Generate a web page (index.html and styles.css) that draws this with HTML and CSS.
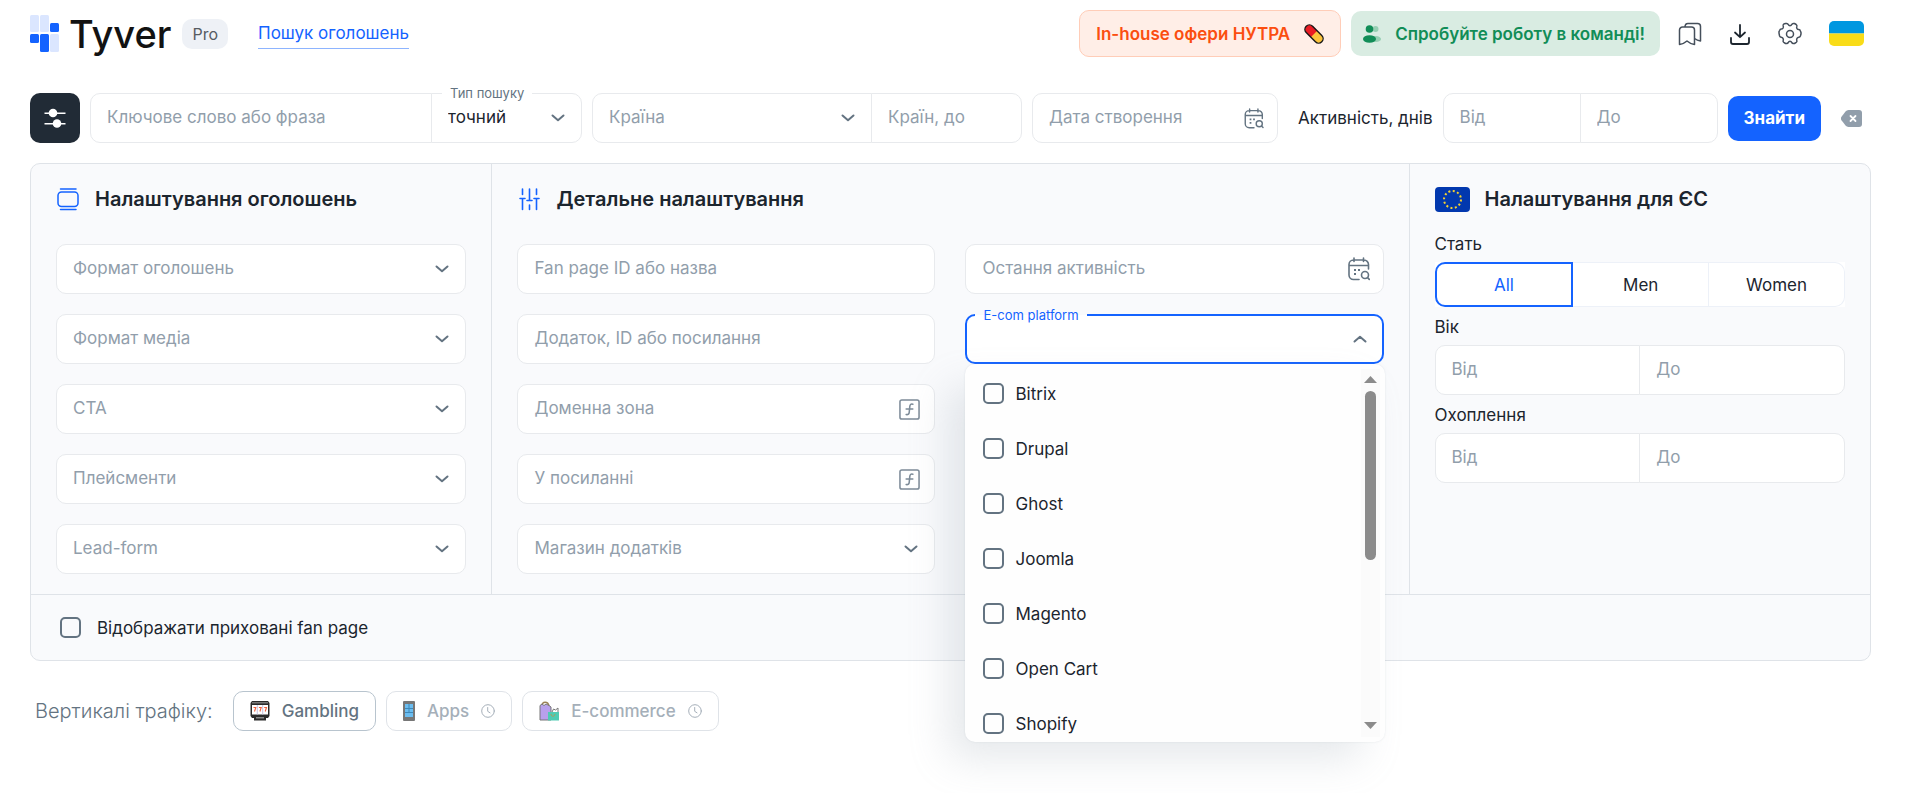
FILE: index.html
```
<!DOCTYPE html>
<html lang="uk">

<head>
  <meta charset="UTF-8">
  <meta name="viewport" content="width=device-width, initial-scale=1">
  <title>Tyver</title>
  <link rel="stylesheet" href="styles.css">
</head>

<body>
  <svg class="sprite" width="0" height="0" aria-hidden="true">
    <symbol id="chevron" viewBox="0 0 14 8"><path d="M1.500 1.500 7 6.200l5.500-4.700" fill="none" stroke="currentColor" stroke-width="2" stroke-linecap="round" stroke-linejoin="round"/></symbol>
    <symbol id="calendar" viewBox="0 0 22 24">
      <g fill="none" stroke="currentColor" stroke-width="1.600" stroke-linecap="round">
        <path d="M20.500 12V7.500a4.500 4.500 0 0 0-4.500-4.500H5.500A4.500 4.500 0 0 0 1 7.500V18a4.500 4.500 0 0 0 4.500 4.500H11M1 8.500h19.500M6 1v3.500M15.500 1v3.500"/>
        <circle cx="17" cy="18" r="3.500"/><path d="m19.600 20.600 1.700 1.800"/>
      </g>
      <path d="M6 12h2v2H6zM10 12h2v2h-2zM6 16h2v2H6z" fill="currentColor"/>
    </symbol>
    <symbol id="func" viewBox="0 0 22 22"><g fill="none" stroke="currentColor" stroke-width="1.600" stroke-linecap="round"><rect x="1" y="1" width="20" height="20" rx="2"/><path d="M14.500 5.500c-2.300-.6-3 .6-3.200 2.500L10.700 14c-.2 1.700-1 2.600-3.200 2.300M7.500 10.500h7"/></g></symbol>
    <symbol id="clock" viewBox="0 0 14 14"><g fill="none" stroke="currentColor" stroke-linecap="round"><circle cx="7" cy="7" r="6.300"/><path d="M6.700 3.500v3.800l2.300 1.500"/></g></symbol>
  </svg>

  <header class="header">
    <a class="logo" href="#">
      <svg width="29" height="37" viewBox="0 0 29 37">
        <g fill="#dbe6ff"><rect width="9" height="17" rx="1.500"/><rect x="10" width="9" height="17" rx="1.500"/><rect x="20" y="19" width="9" height="18" rx="1.500"/></g>
        <g fill="#1463ff"><rect x="20" y="8" width="9" height="9" rx="1.500"/><rect y="19" width="9" height="9" rx="1.500"/><rect x="10" y="19" width="9" height="18" rx="1.500"/></g>
      </svg>
      <span class="logo-text">Tyver</span>
    </a>
    <span class="badge">Pro</span>
    <a class="nav-link" href="#">Пошук оголошень</a>

    <div class="header-right">
      <button class="promo promo-orange">In-house офери НУТРА
        <svg width="20" height="20" viewBox="0 0 20 20">
          <g transform="rotate(45 10 10)"><rect x="-1" y="5.500" width="22" height="9" rx="4.500" fill="#fcc43c"/><path d="M10 5.500H3.500a4.500 4.500 0 0 0 0 9H10z" fill="#ea1c24"/><rect x="-1" y="5.500" width="22" height="9" rx="4.500" fill="none" stroke="#161616" stroke-width="1.400"/></g>
        </svg>
      </button>
      <button class="promo promo-green">
        <svg width="18" height="18" viewBox="0 0 18 18">
          <g fill="#97cfb3"><circle cx="12.500" cy="4" r="3"/><ellipse cx="13" cy="14" rx="5" ry="3"/></g>
          <g fill="#118d57"><circle cx="6.500" cy="4" r="3.800"/><ellipse cx="6.500" cy="14" rx="6.500" ry="3.800"/></g>
        </svg>
        Спробуйте роботу в команді!
      </button>
      <button class="icon-btn" aria-label="Закладки">
        <svg width="24" height="24" viewBox="0 0 24 24" fill="none" stroke="#454f5b" stroke-width="1.500" stroke-linejoin="round"><path d="M1.500 22.500V8a3 3 0 0 1 3-3h9a3 3 0 0 1 3 3v14.500c-2.800-.3-5.300-1.600-7.500-3.500-2.200 1.900-4.700 3.200-7.500 3.500z"/><path d="M7 5c0-2.500 1-3.500 3-3.500h9.500a3 3 0 0 1 3 3V19c-2.200-.3-4-1-6-2.500"/></svg>
      </button>
      <button class="icon-btn" aria-label="Завантаження">
        <svg width="22" height="22" viewBox="0 0 22 22" fill="none" stroke="#1c252e" stroke-width="1.800" stroke-linecap="round" stroke-linejoin="round"><path d="M11 2v12M6 9.500l5 4.700 5-4.700M2 15v4a2 2 0 0 0 2 2h14a2 2 0 0 0 2-2v-4"/></svg>
      </button>
      <button class="icon-btn" aria-label="Налаштування">
        <svg width="24" height="24" viewBox="0 0 24 24" fill="none" stroke="#454f5b" stroke-width="1.500" stroke-linejoin="round"><circle cx="12" cy="12" r="3.500"/><path d="M7.500 1.500h1.200c.8 0 1.300.4 1.600 1.100.3.800.9 1.200 1.700 1.200s1.400-.4 1.700-1.200c.3-.7.800-1.100 1.600-1.100h1.200l1.700 1c.7.500.9 1.200.6 2-.3.700-.2 1.500.2 2.100.4.700 1 1 1.700 1 .9.100 1.500.6 1.700 1.400l.6 1.600v1.500l-.6 1.900c-.3.700-.8 1.100-1.600 1.200-.8.100-1.400.4-1.800 1.100-.4.700-.5 1.400-.2 2.100.3.800.1 1.500-.6 2l-1.700 1.100h-1.200c-.8 0-1.300-.4-1.600-1.100-.3-.8-.9-1.200-1.700-1.200s-1.400.4-1.700 1.200c-.3.700-.8 1.100-1.600 1.100H7.500l-1.700-1.100c-.7-.5-.9-1.200-.6-2 .3-.7.200-1.400-.2-2.100-.4-.7-1-1-1.800-1.100-.8-.1-1.300-.5-1.600-1.200L1 11.100V9.600L1.600 8.500c.3-.8.800-1.300 1.700-1.400.7 0 1.300-.4 1.700-1 .4-.7.500-1.400.2-2.100-.3-.8-.1-1.500.6-2z"/></svg>
      </button>
      <button class="icon-btn" aria-label="Українська">
        <svg width="35" height="25" viewBox="0 0 35 25"><path d="M5 0h25a5 5 0 0 1 5 5v7.500H0V5a5 5 0 0 1 5-5z" fill="#0097e0"/><path d="M0 12.500h35V20a5 5 0 0 1-5 5H5a5 5 0 0 1-5-5z" fill="#f9dc18"/></svg>
      </button>
    </div>
  </header>

  <form class="search">
    <button class="filter-toggle" type="button" aria-label="Фільтри">
      <svg width="22" height="20" viewBox="0 0 22 20" fill="#fff"><path d="M.5 4.500h21v1.500H.5zM.5 15h21v1.500H.5z"/><circle cx="9" cy="5" r="4.300"/><circle cx="13" cy="15.500" r="4.300"/></svg>
    </button>
    <div class="group group-keyword">
      <div class="field wide"><input type="text" aria-label="Ключове слово або фраза" placeholder="Ключове слово або фраза"></div>
      <div class="field short">
        <label class="float-label" for="type">Тип пошуку</label>
        <select id="type" class="filled"><option>точний</option></select>
        <svg class="chevron"><use href="#chevron"/></svg>
      </div>
    </div>
    <div class="group group-country">
      <div class="field wide">
        <select aria-label="Країна"><option>Країна</option></select>
        <svg class="chevron"><use href="#chevron"/></svg>
      </div>
      <div class="field short"><input type="text" aria-label="Країн, до" placeholder="Країн, до"></div>
    </div>
    <div class="group group-date">
      <div class="field">
        <input type="text" aria-label="Дата створення" placeholder="Дата створення">
        <svg class="calendar small"><use href="#calendar"/></svg>
      </div>
    </div>
    <label class="activity" for="act-from">Активність, днів</label>
    <div class="group group-activity">
      <div class="field"><input id="act-from" type="text" placeholder="Від"></div>
      <div class="field"><input type="text" aria-label="До" placeholder="До"></div>
    </div>
    <button class="submit" type="button">Знайти</button>
    <button class="clear" type="reset" aria-label="Очистити">
      <svg width="21" height="17" viewBox="0 0 21 17"><path d="M7.500 0H18a3 3 0 0 1 3 3v11a3 3 0 0 1-3 3H7.500a4 4 0 0 1-3-1.500l-4-5.300a3 3 0 0 1 0-3.400l4-5.300A4 4 0 0 1 7.500 0z" fill="#919eab"/><path d="m9.500 6 5 5m0-5-5 5" stroke="#fff" stroke-width="1.800" stroke-linecap="round"/></svg>
    </button>
  </form>

  <main class="panel">
    <div class="columns">
      <section class="col">
        <h2>
          <svg width="24" height="24" viewBox="0 0 24 24" fill="none" stroke="#1463ff" stroke-width="1.500" stroke-linecap="round"><rect x="2" y="5" width="20" height="14.500" rx="3.500"/><path d="M4.500 2h15.500M4.500 22.500h15.500"/></svg>
          Налаштування оголошень
        </h2>
        <div class="stack">
          <div class="field"><select aria-label="Формат оголошень"><option>Формат оголошень</option></select><svg class="chevron"><use href="#chevron"/></svg></div>
          <div class="field"><select aria-label="Формат медіа"><option>Формат медіа</option></select><svg class="chevron"><use href="#chevron"/></svg></div>
          <div class="field"><select aria-label="CTA"><option>CTA</option></select><svg class="chevron"><use href="#chevron"/></svg></div>
          <div class="field"><select aria-label="Плейсменти"><option>Плейсменти</option></select><svg class="chevron"><use href="#chevron"/></svg></div>
          <div class="field"><select aria-label="Lead-form"><option>Lead-form</option></select><svg class="chevron"><use href="#chevron"/></svg></div>
        </div>
      </section>

      <section class="col">
        <h2>
          <svg width="24" height="24" viewBox="0 0 24 24" fill="none" stroke="#1463ff" stroke-width="1.600" stroke-linecap="round"><path d="M5.500 2v5.500M5.500 11.500v11M3 11.500h5M12.500 2v11.500M12.500 18v4.500M10 13.500h5M19.500 2v5.500M19.500 11.500v11M17 11.500h5"/></svg>
          Детальне налаштування
        </h2>
        <div class="detail">
          <div class="stack">
            <div class="field"><input type="text" aria-label="Fan page ID або назва" placeholder="Fan page ID або назва"></div>
            <div class="field"><input type="text" aria-label="Додаток, ID або посилання" placeholder="Додаток, ID або посилання"></div>
            <div class="field"><input type="text" aria-label="Доменна зона" placeholder="Доменна зона"><svg class="func"><use href="#func"/></svg></div>
            <div class="field"><input type="text" aria-label="У посиланні" placeholder="У посиланні"><svg class="func"><use href="#func"/></svg></div>
            <div class="field"><select aria-label="Магазин додатків"><option>Магазин додатків</option></select><svg class="chevron"><use href="#chevron"/></svg></div>
          </div>
          <div class="stack">
            <div class="field"><input type="text" aria-label="Остання активність" placeholder="Остання активність"><svg class="calendar"><use href="#calendar"/></svg></div>
            <div class="field open">
              <label class="float-label" for="ecom">E-com platform</label>
              <input id="ecom" type="text" role="combobox" aria-expanded="true" aria-controls="ecom-list">
              <svg class="chevron up"><use href="#chevron"/></svg>
              <div class="dropdown" id="ecom-list">
                <div class="options">
                  <label class="option"><input type="checkbox">Bitrix</label>
                  <label class="option"><input type="checkbox">Drupal</label>
                  <label class="option"><input type="checkbox">Ghost</label>
                  <label class="option"><input type="checkbox">Joomla</label>
                  <label class="option"><input type="checkbox">Magento</label>
                  <label class="option"><input type="checkbox">Open Cart</label>
                  <label class="option"><input type="checkbox">Shopify</label>
                </div>
                <div class="scrollbar">
                  <svg width="13" height="7" viewBox="0 0 13 7"><path d="M0 7 6.500 0 13 7z" fill="#8b8b8b"/></svg>
                  <span class="thumb"></span>
                  <svg width="13" height="7" viewBox="0 0 13 7"><path d="m0 0 6.500 7L13 0z" fill="#8b8b8b"/></svg>
                </div>
              </div>
            </div>
          </div>
        </div>
      </section>

      <section class="col col-eu">
        <h2>
          <svg width="35" height="25" viewBox="0 0 35 25"><rect width="35" height="25" rx="4" fill="#0238ae"/><circle cx="17.500" cy="12.500" r="8.500" fill="none" stroke="#f5d130" stroke-width="2" stroke-dasharray="2 2.450"/></svg>
          Налаштування для ЄС
        </h2>
        <span class="caption">Стать</span>
        <div class="segmented">
          <button type="button" class="active">All</button>
          <button type="button">Men</button>
          <button type="button">Women</button>
        </div>
        <label class="caption" for="age-from">Вік</label>
        <div class="group">
          <div class="field"><input id="age-from" type="text" placeholder="Від"></div>
          <div class="field"><input type="text" aria-label="Вік, до" placeholder="До"></div>
        </div>
        <label class="caption" for="reach-from">Охоплення</label>
        <div class="group">
          <div class="field"><input id="reach-from" type="text" placeholder="Від"></div>
          <div class="field"><input type="text" aria-label="Охоплення, до" placeholder="До"></div>
        </div>
      </section>
    </div>
    <label class="hidden-pages"><input type="checkbox">Відображати приховані fan page</label>
  </main>

  <div class="verticals">
    <span class="verticals-title">Вертикалі трафіку:</span>
    <button class="chip chip-active">
      <svg width="20" height="20" viewBox="0 0 20 20"><path d="M2 0h16l1.500 2v13L18 17h-2v2.500H4V17H2L.5 15V2z" fill="#2a2a2a"/><rect x="2" y="1" width="16" height="1.500" fill="#777"/><rect x="2" y="4" width="16" height="9.500" fill="#fff"/><path d="M3.500 6.500h2.300l-1.300 4M8.900 6.500h2.300l-1.300 4M14.200 6.500h2.300l-1.300 4" fill="none" stroke="#f0603c" stroke-width="1.100"/><path d="M7.300 4v9.500M12.700 4v9.500" stroke="#c8c2e0"/><rect x="6" y="16" width="8" height="1.500" fill="#888"/></svg>
      Gambling
    </button>
    <button class="chip">
      <svg width="12" height="20" viewBox="0 0 12 20"><rect width="12" height="20" rx="1" fill="#777"/><rect x="2" y="3" width="8" height="13" fill="#6bbdf0"/><path d="M6 3v8M2 7.500h8M2 11.500h8" stroke="#3f88b8"/></svg>
      Apps
      <svg class="clock"><use href="#clock"/></svg>
    </button>
    <button class="chip">
      <svg width="20" height="20" viewBox="0 0 20 20"><path d="M3 5c0-5 6-5 7 0" fill="none" stroke="#9a8256" stroke-width="1.500"/><path d="M1 4.500 3 3l2 1.500L7 3l3 1.500L12 6v13H1z" fill="#b8a0ec" stroke="#777"/><path d="m13 11 1.500-3 2 1 2.500-2v4" fill="#fff" stroke="#777"/><path d="M9 11h11v8.500H9z" fill="#4ecbb3"/><path d="M12 13c0 3 4 3 4 0" fill="none" stroke="#b09a5e"/></svg>
      E-commerce
      <svg class="clock"><use href="#clock"/></svg>
    </button>
  </div>
</body>

</html>
```
FILE: styles.css
```
* {
  box-sizing: border-box;
}

body {
  min-height: 100vh;
  margin: 0;
  padding: 10px 35px 24px 30px;
  background-color: #fff;
  color: #1c252e;
  font-family: "Inter", "Noto Sans", sans-serif;
  font-size: 17px;
  line-height: 24px;
}

button,
input,
select {
  font: inherit;
  color: inherit;
}

button {
  border: 0;
  background: none;
  padding: 0;
  cursor: pointer;
}

svg {
  flex: none;
}

.sprite {
  position: absolute;
}

/* header */
.header {
  display: flex;
  align-items: center;
  height: 47px;
}

.logo {
  display: flex;
  align-items: center;
  gap: 10px;
  color: #121212;
  text-decoration: none;
}

.logo-text {
  font-size: 38px;
  font-weight: 500;
  line-height: 40px;
}

.badge {
  margin-left: 11px;
  padding: 3px 10px;
  border-radius: 10px;
  background-color: #eef1f6;
  color: #565b62;
  font-size: 16px;
}

.nav-link {
  margin-left: 30px;
  border-bottom: 1px solid #8db4ff;
  color: #1463ff;
  line-height: 30px;
  text-decoration: none;
}

.header-right {
  display: flex;
  align-items: center;
  margin-left: auto;
  padding-right: 7px;
}

.promo {
  display: flex;
  align-items: center;
  height: 45px;
  border-radius: 10px;
  font-weight: 600;
}

.promo-orange {
  gap: 14px;
  height: 47px;
  padding: 0 16px;
  border: 1px solid #ffcdb8;
  background-color: #ffeee7;
  color: #fb4e10;
}

.promo-green {
  gap: 14px;
  margin-left: 10px;
  padding: 0 15px 0 12px;
  background-color: #d9ece2;
  color: #118d57;
}

.icon-btn {
  display: flex;
  margin-left: 27px;
}

.promo-green + .icon-btn {
  margin-left: 18px;
}

/* search row */
.search {
  display: flex;
  align-items: center;
  gap: 10px;
  margin-top: 36px;
}

.filter-toggle {
  display: flex;
  flex: none;
  align-items: center;
  justify-content: center;
  width: 50px;
  height: 50px;
  border-radius: 10px;
  background-color: #212b36;
}

.field {
  position: relative;
  display: flex;
  flex: 1;
  align-items: center;
  min-width: 0;
  height: 50px;
  padding: 0 16px;
  border: 1px solid #e8eaed;
  border-radius: 10px;
  background-color: #fff;
}

.field input,
.field select {
  flex: 1;
  min-width: 0;
  height: 100%;
  padding: 0 0 3px;
  border: 0;
  outline: 0;
  appearance: none;
  background: transparent;
}

.field select,
.field input::placeholder {
  color: #919eab;
  opacity: 1;
}

.field select.filled {
  color: #1c252e;
}

.group {
  display: flex;
  min-width: 0;
}

.group .field + .field {
  margin-left: -1px;
  border-top-left-radius: 0;
  border-bottom-left-radius: 0;
}

.group .field:not(:last-child) {
  border-top-right-radius: 0;
  border-bottom-right-radius: 0;
}

.group-keyword {
  flex: 492;
}

.group-keyword .wide {
  flex: 308;
}

.group-country {
  flex: 430;
}

.group-country .wide {
  flex: 246;
}

.group .short {
  flex: 117;
}

.group-date {
  flex: 246;
}

.group-activity {
  flex: 275;
}

.activity {
  margin-left: 10px;
  white-space: nowrap;
}

.float-label {
  position: absolute;
  top: -10px;
  left: 10px;
  padding: 0 8px;
  background-color: #fff;
  color: #637381;
  font-size: 13px;
  line-height: 18px;
}

.chevron {
  width: 14px;
  height: 8px;
  color: #637381;
  pointer-events: none;
}

.chevron.up {
  transform: rotate(180deg);
}

.calendar {
  width: 22px;
  height: 24px;
  margin-right: -3px;
  color: #637381;
}

.calendar.small {
  width: 20px;
  height: 21px;
}

.func {
  width: 21px;
  height: 21px;
  margin-right: -2px;
  color: #7d8b98;
}

.submit {
  height: 45px;
  padding: 0 16px;
  border-radius: 10px;
  background-color: #1463ff;
  color: #fff;
  font-weight: 700;
}

.clear {
  display: flex;
  margin: 0 9px 0 10px;
}

/* settings panel */
.panel {
  margin-top: 20px;
  border: 1px solid #dfe3e8;
  border-radius: 10px;
  background-color: #f9fafc;
}

.columns {
  display: grid;
  grid-template-columns: 461fr 918fr 462fr;
}

.col {
  min-width: 0;
  padding: 20px 25px;
}

.col + .col {
  border-left: 1px solid #dfe3e8;
}

h2 {
  display: flex;
  align-items: center;
  gap: 15px;
  height: 30px;
  margin: 0 0 30px;
  font-size: 20px;
  font-weight: 600;
}

.col-eu h2 {
  margin-bottom: 18px;
}

.stack {
  display: flex;
  flex-direction: column;
  gap: 20px;
}

.stack .field {
  flex: none;
}

.detail {
  display: grid;
  grid-template-columns: 1fr 1fr;
  gap: 30px;
}

.field.open {
  padding: 0 15px;
  border: 2px solid #1463ff;
}

.open > .float-label {
  left: 8px;
  background: linear-gradient(#f9fafc 50%, #fff 50%);
  color: #1463ff;
}

.dropdown {
  position: absolute;
  z-index: 2;
  top: 100%;
  left: -2px;
  right: -3px;
  display: flex;
  margin-top: 2px;
  padding: 5px;
  border-radius: 10px;
  background-color: #fefefe;
  box-shadow: -20px 20px 40px -4px rgba(145, 158, 171, 0.24), 0 0 2px rgba(145, 158, 171, 0.24);
}

.options {
  flex: 1;
  height: 368px;
  overflow: hidden;
}

.option {
  display: flex;
  align-items: center;
  gap: 11px;
  height: 55px;
  padding: 0 13px 6px;
}

.field .option input,
.hidden-pages input {
  flex: none;
  width: 21px;
  height: 21px;
  margin: 0;
  padding: 0;
  border: 2px solid #637381;
  border-radius: 5px;
  appearance: none;
}

.scrollbar {
  display: flex;
  flex-direction: column;
  align-items: center;
  width: 19px;
  padding: 7px 0 8px;
  background-color: #fbfbfb;
}

.thumb {
  width: 11px;
  height: 169px;
  margin: 8px 0 auto;
  border-radius: 6px;
  background-color: #8b8b8b;
}

.caption {
  display: block;
  margin-bottom: 6px;
}

.segmented {
  display: flex;
  height: 45px;
  margin-bottom: 8px;
  background-color: #fff;
}

.segmented button {
  flex: 1;
  border: 1px solid #edf1f8;
  border-left: 0;
}

.segmented .active {
  border: 2px solid #1463ff;
  border-radius: 10px 0 0 10px;
  color: #1463ff;
}

.segmented button:last-child {
  border-radius: 0 10px 10px 0;
}

.col-eu .group {
  margin-bottom: 8px;
}

.hidden-pages {
  display: flex;
  align-items: center;
  gap: 16px;
  height: 66px;
  padding: 0 29px;
  border-top: 1px solid #dfe3e8;
}

/* traffic verticals */
.verticals {
  display: flex;
  align-items: center;
  gap: 10px;
  margin: 30px 5px 0;
}

.verticals-title {
  margin-right: 10px;
  color: #637381;
  font-size: 20px;
  font-weight: 300;
}

.chip {
  display: flex;
  align-items: center;
  gap: 12px;
  height: 40px;
  padding: 0 16px;
  border: 1px solid #dfe3e8;
  border-radius: 10px;
  color: #a5afb9;
  font-weight: 500;
}

.chip-active {
  border-color: #b8c4ce;
  color: #637381;
}

.clock {
  width: 14px;
  height: 14px;
}
```
